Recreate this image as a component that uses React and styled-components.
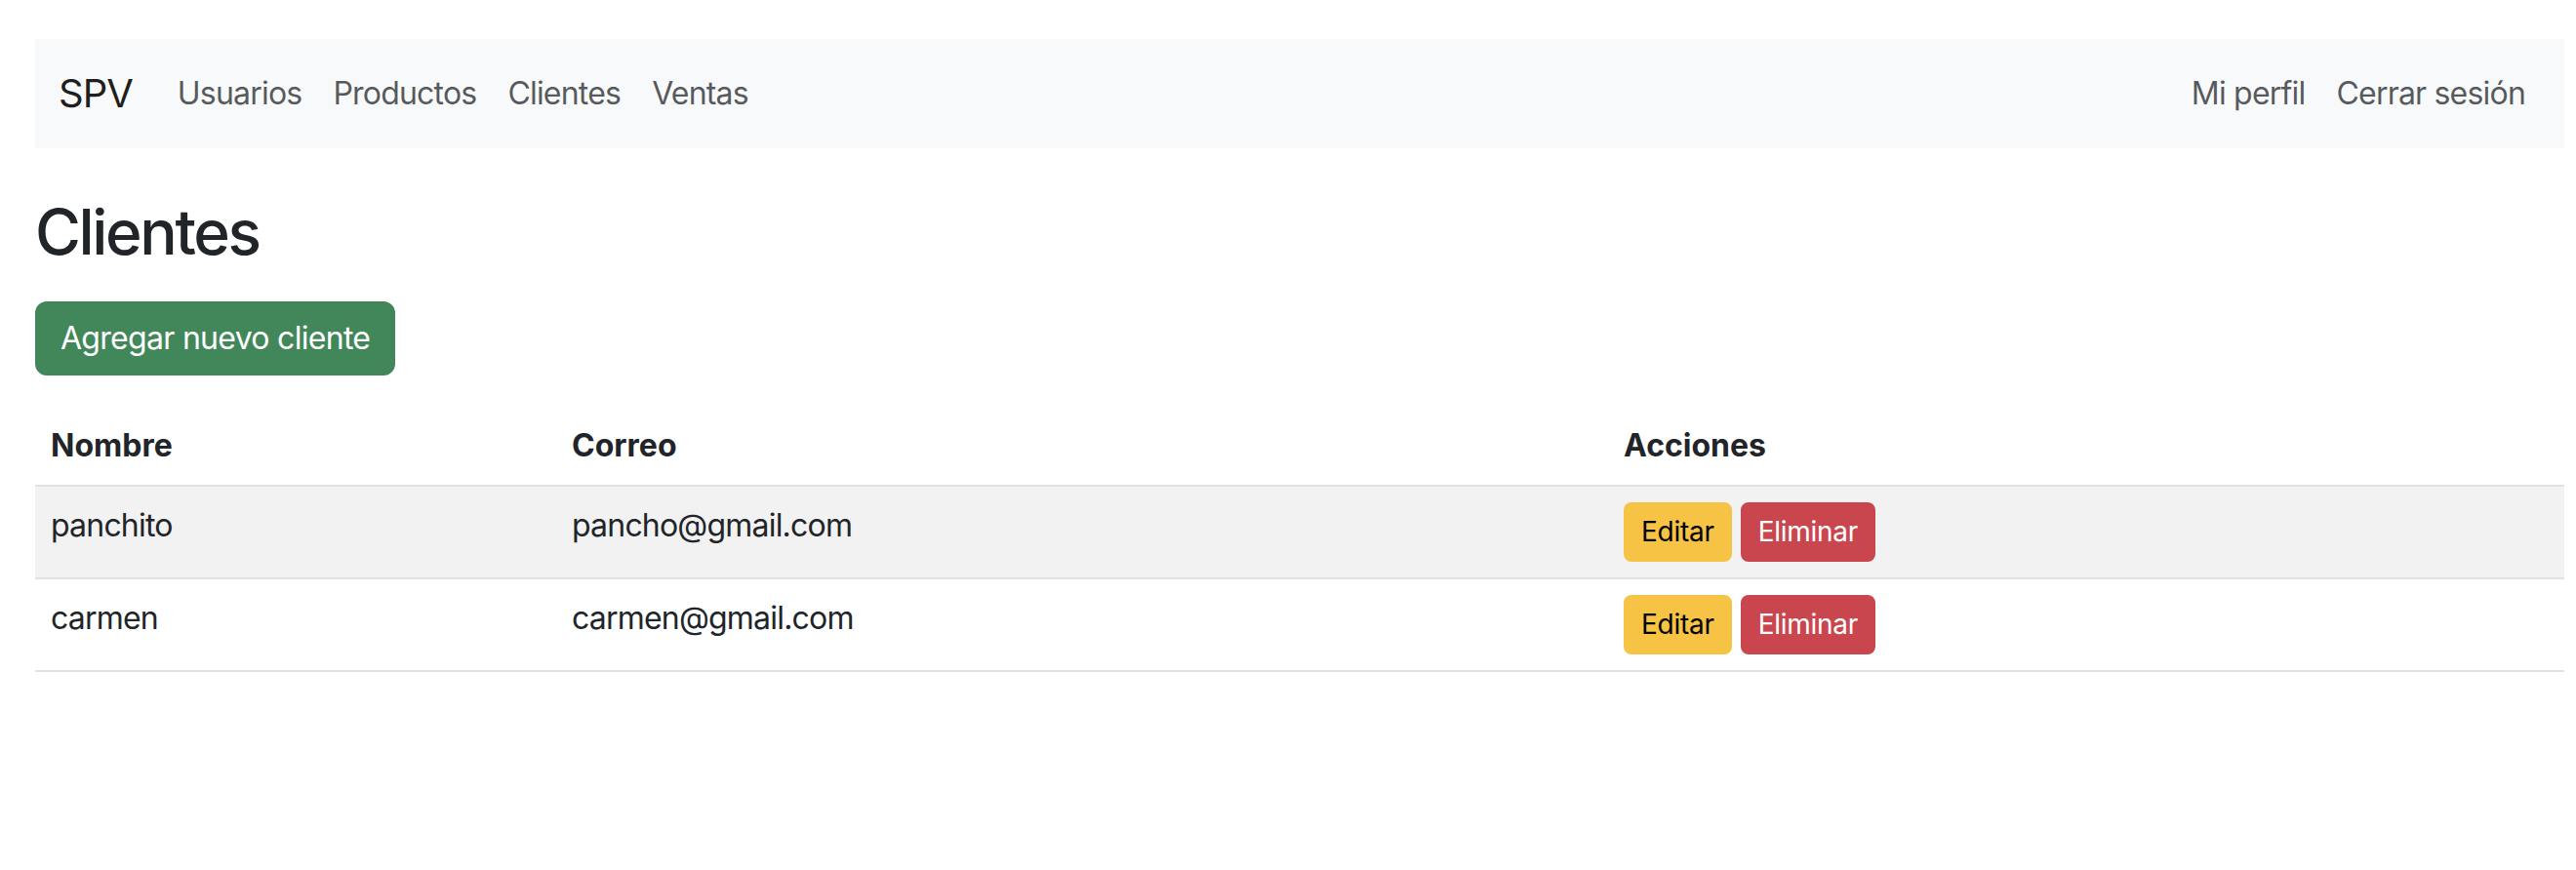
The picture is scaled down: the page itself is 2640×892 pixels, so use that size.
import React from 'react';
import styled, { createGlobalStyle } from 'styled-components';

const Global = createGlobalStyle`
  html, body { margin: 0; padding: 0; background: #ffffff; }
  body {
    font-family: Inter, "Helvetica Neue", "Liberation Sans", Arial, sans-serif;
    color: #212529;
    font-size: 32px;
    line-height: 1.5;
    letter-spacing: -0.025em;
  }
  *, *::before, *::after { box-sizing: border-box; }
`;

const Page = styled.div`
  width: 2592px;
  margin-left: 36px;
  padding-top: 40px;
`;

const Navbar = styled.nav`
  background: #f8f9fa;
  height: 112px;
  padding: 16px 24px;
  display: flex;
  align-items: center;
`;

const Brand = styled.a`
  font-size: 40px;
  line-height: 60px;
  padding: 10px 0;
  margin-right: 30px;
  color: rgba(0, 0, 0, 0.9);
  text-decoration: none;
  letter-spacing: -0.025em;
`;

const NavList = styled.ul`
  display: flex;
  list-style: none;
  margin: 0;
  padding: 0;
  margin-left: ${(p) => (p.$end ? 'auto' : '0')};
`;

const NavLink = styled.a`
  display: block;
  padding: 16px;
  font-size: 32px;
  line-height: 48px;
  color: rgba(33, 37, 41, 0.75);
  text-decoration: none;
`;

const Title = styled.h2`
  margin: 48px 0 32px;
  font-size: 64px;
  font-weight: 500;
  line-height: 1.2;
  color: #212529;
  letter-spacing: -0.037em;
`;

const Button = styled.button`
  display: inline-block;
  font-family: inherit;
  font-size: ${(p) => (p.$small ? '28px' : '32px')};
  line-height: ${(p) => (p.$small ? '41px' : '48px')};
  letter-spacing: ${(p) => (p.$small ? '-0.01em' : '-0.022em')};
  padding: ${(p) => (p.$small ? '8px 16px' : '12px 24px')};
  border-radius: ${(p) => (p.$small ? '8px' : '12px')};
  border: 2px solid ${(p) => p.$bg};
  background: ${(p) => p.$bg};
  color: ${(p) => p.$fg};
  font-weight: 400;
  cursor: pointer;
`;

const Toolbar = styled.div`
  margin-bottom: 32px;
  line-height: 0;
`;

const Table = styled.table`
  width: 2592px;
  border-collapse: collapse;
  table-layout: fixed;
`;

const Th = styled.th`
  text-align: left;
  font-weight: 700;
  padding: 16px;
  line-height: 48px;
  letter-spacing: 0;
  vertical-align: top;
  border-bottom: 2px solid #dee2e6;
`;

const Td = styled.td`
  padding: 16px;
  line-height: 48px;
  vertical-align: top;
  border-bottom: 2px solid #dee2e6;
`;

const Row = styled.tr`
  background: ${(p) => (p.$striped ? '#f2f2f2' : '#ffffff')};
`;

const Actions = styled.div`
  display: flex;
  gap: 9px;
`;

const clients = [
  { name: 'panchito', email: 'pancho@gmail.com' },
  { name: 'carmen', email: 'carmen@gmail.com' },
];

export default function App() {
  return (
    <>
      <Global />
      <Page>
        <Navbar>
          <Brand href="#">SPV</Brand>
          <NavList>
            <li><NavLink href="#">Usuarios</NavLink></li>
            <li><NavLink href="#">Productos</NavLink></li>
            <li><NavLink href="#">Clientes</NavLink></li>
            <li><NavLink href="#">Ventas</NavLink></li>
          </NavList>
          <NavList $end>
            <li><NavLink href="#">Mi perfil</NavLink></li>
            <li><NavLink href="#">Cerrar sesión</NavLink></li>
          </NavList>
        </Navbar>
        <Title>Clientes</Title>
        <Toolbar>
          <Button $bg="#41875a" $fg="#ffffff">Agregar nuevo cliente</Button>
        </Toolbar>
        <Table>
          <colgroup>
            <col style={{ width: 534 }} />
            <col style={{ width: 1078 }} />
            <col style={{ width: 980 }} />
          </colgroup>
          <thead>
            <tr>
              <Th>Nombre</Th>
              <Th>Correo</Th>
              <Th>Acciones</Th>
            </tr>
          </thead>
          <tbody>
            {clients.map((c, i) => (
              <Row key={c.name} $striped={i % 2 === 0}>
                <Td>{c.name}</Td>
                <Td>{c.email}</Td>
                <Td>
                  <Actions>
                    <Button $small $bg="#f6c344" $fg="#000000">Editar</Button>
                    <Button $small $bg="#c9464f" $fg="#ffffff">Eliminar</Button>
                  </Actions>
                </Td>
              </Row>
            ))}
          </tbody>
        </Table>
      </Page>
    </>
  );
}
